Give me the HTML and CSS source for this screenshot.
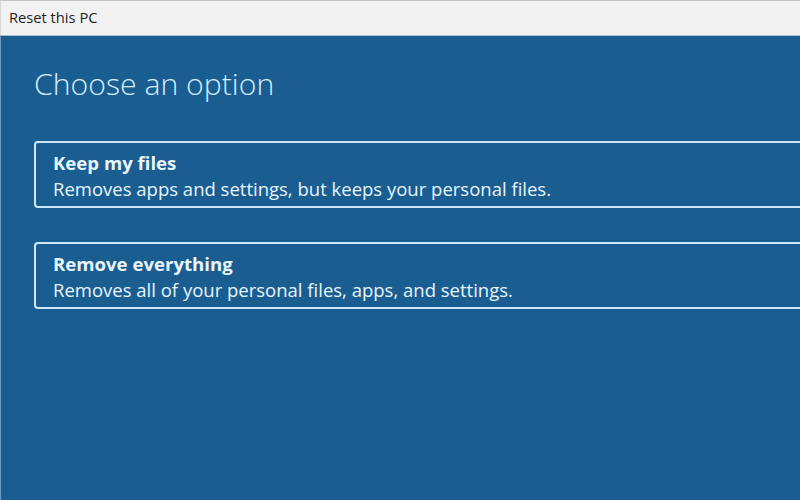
FILE: index.html
```html
<!DOCTYPE html>
<html lang="en">
<head>
<meta charset="utf-8">
<title>Reset this PC</title>
<link rel="stylesheet" href="styles.css">
</head>
<body>
<div class="window">
  <div class="titlebar">Reset this PC</div>
  <main class="content">
    <h1 class="heading">Choose an option</h1>
    <div class="options">
      <div class="option">
        <div class="option-title">Keep my files</div>
        <div class="option-desc">Removes apps and settings, but keeps your personal files.</div>
      </div>
      <div class="option">
        <div class="option-title">Remove everything</div>
        <div class="option-desc">Removes all of your personal files, apps, and settings.</div>
      </div>
    </div>
  </main>
</div>
</body>
</html>
```

FILE: styles.css
```css
html, body {
  margin: 0;
  padding: 0;
  width: 800px;
  height: 500px;
  overflow: hidden;
  font-family: "Open Sans", "Noto Sans", "Liberation Sans", sans-serif;
}
.window {
  display: flex;
  flex-direction: column;
  height: 500px;
  border-top: 1px solid #c4c4c4;
  box-sizing: border-box;
}
.titlebar {
  height: 35px;
  background: #f2f2f2;
  color: #1e1e1e;
  font-size: 14.7px;
  line-height: 33px;
  padding-left: 8px;
  border-left: 1px solid #d8d8d8;
  border-bottom: 1px solid #9fc4e0;
  box-sizing: border-box;
}
.content {
  flex: 1;
  background: #1a5d91;
  border-left: 1px solid #6f9cc4;
  border-top: 1px solid #2a5478;
  padding: 0 0 0 33px;
}
.heading {
  margin: 26px 0 0 0;
  font-weight: 300;
  font-size: 30.2px;
  line-height: 42px;
  color: #d4edfb;
}
.options {
  display: flex;
  flex-direction: column;
  gap: 34px;
  margin-top: 36px;
  margin-right: -20px;
}
.option {
  border: 2px solid #cbe7f8;
  border-radius: 4px;
  height: 67px;
  box-sizing: border-box;
  padding: 7px 0 0 17px;
  color: #e8f5fd;
}
.option-title {
  font-weight: 700;
  font-size: 18.6px;
  line-height: 25px;
}
.option-desc {
  font-size: 18.5px;
  line-height: 28px;
}
```
